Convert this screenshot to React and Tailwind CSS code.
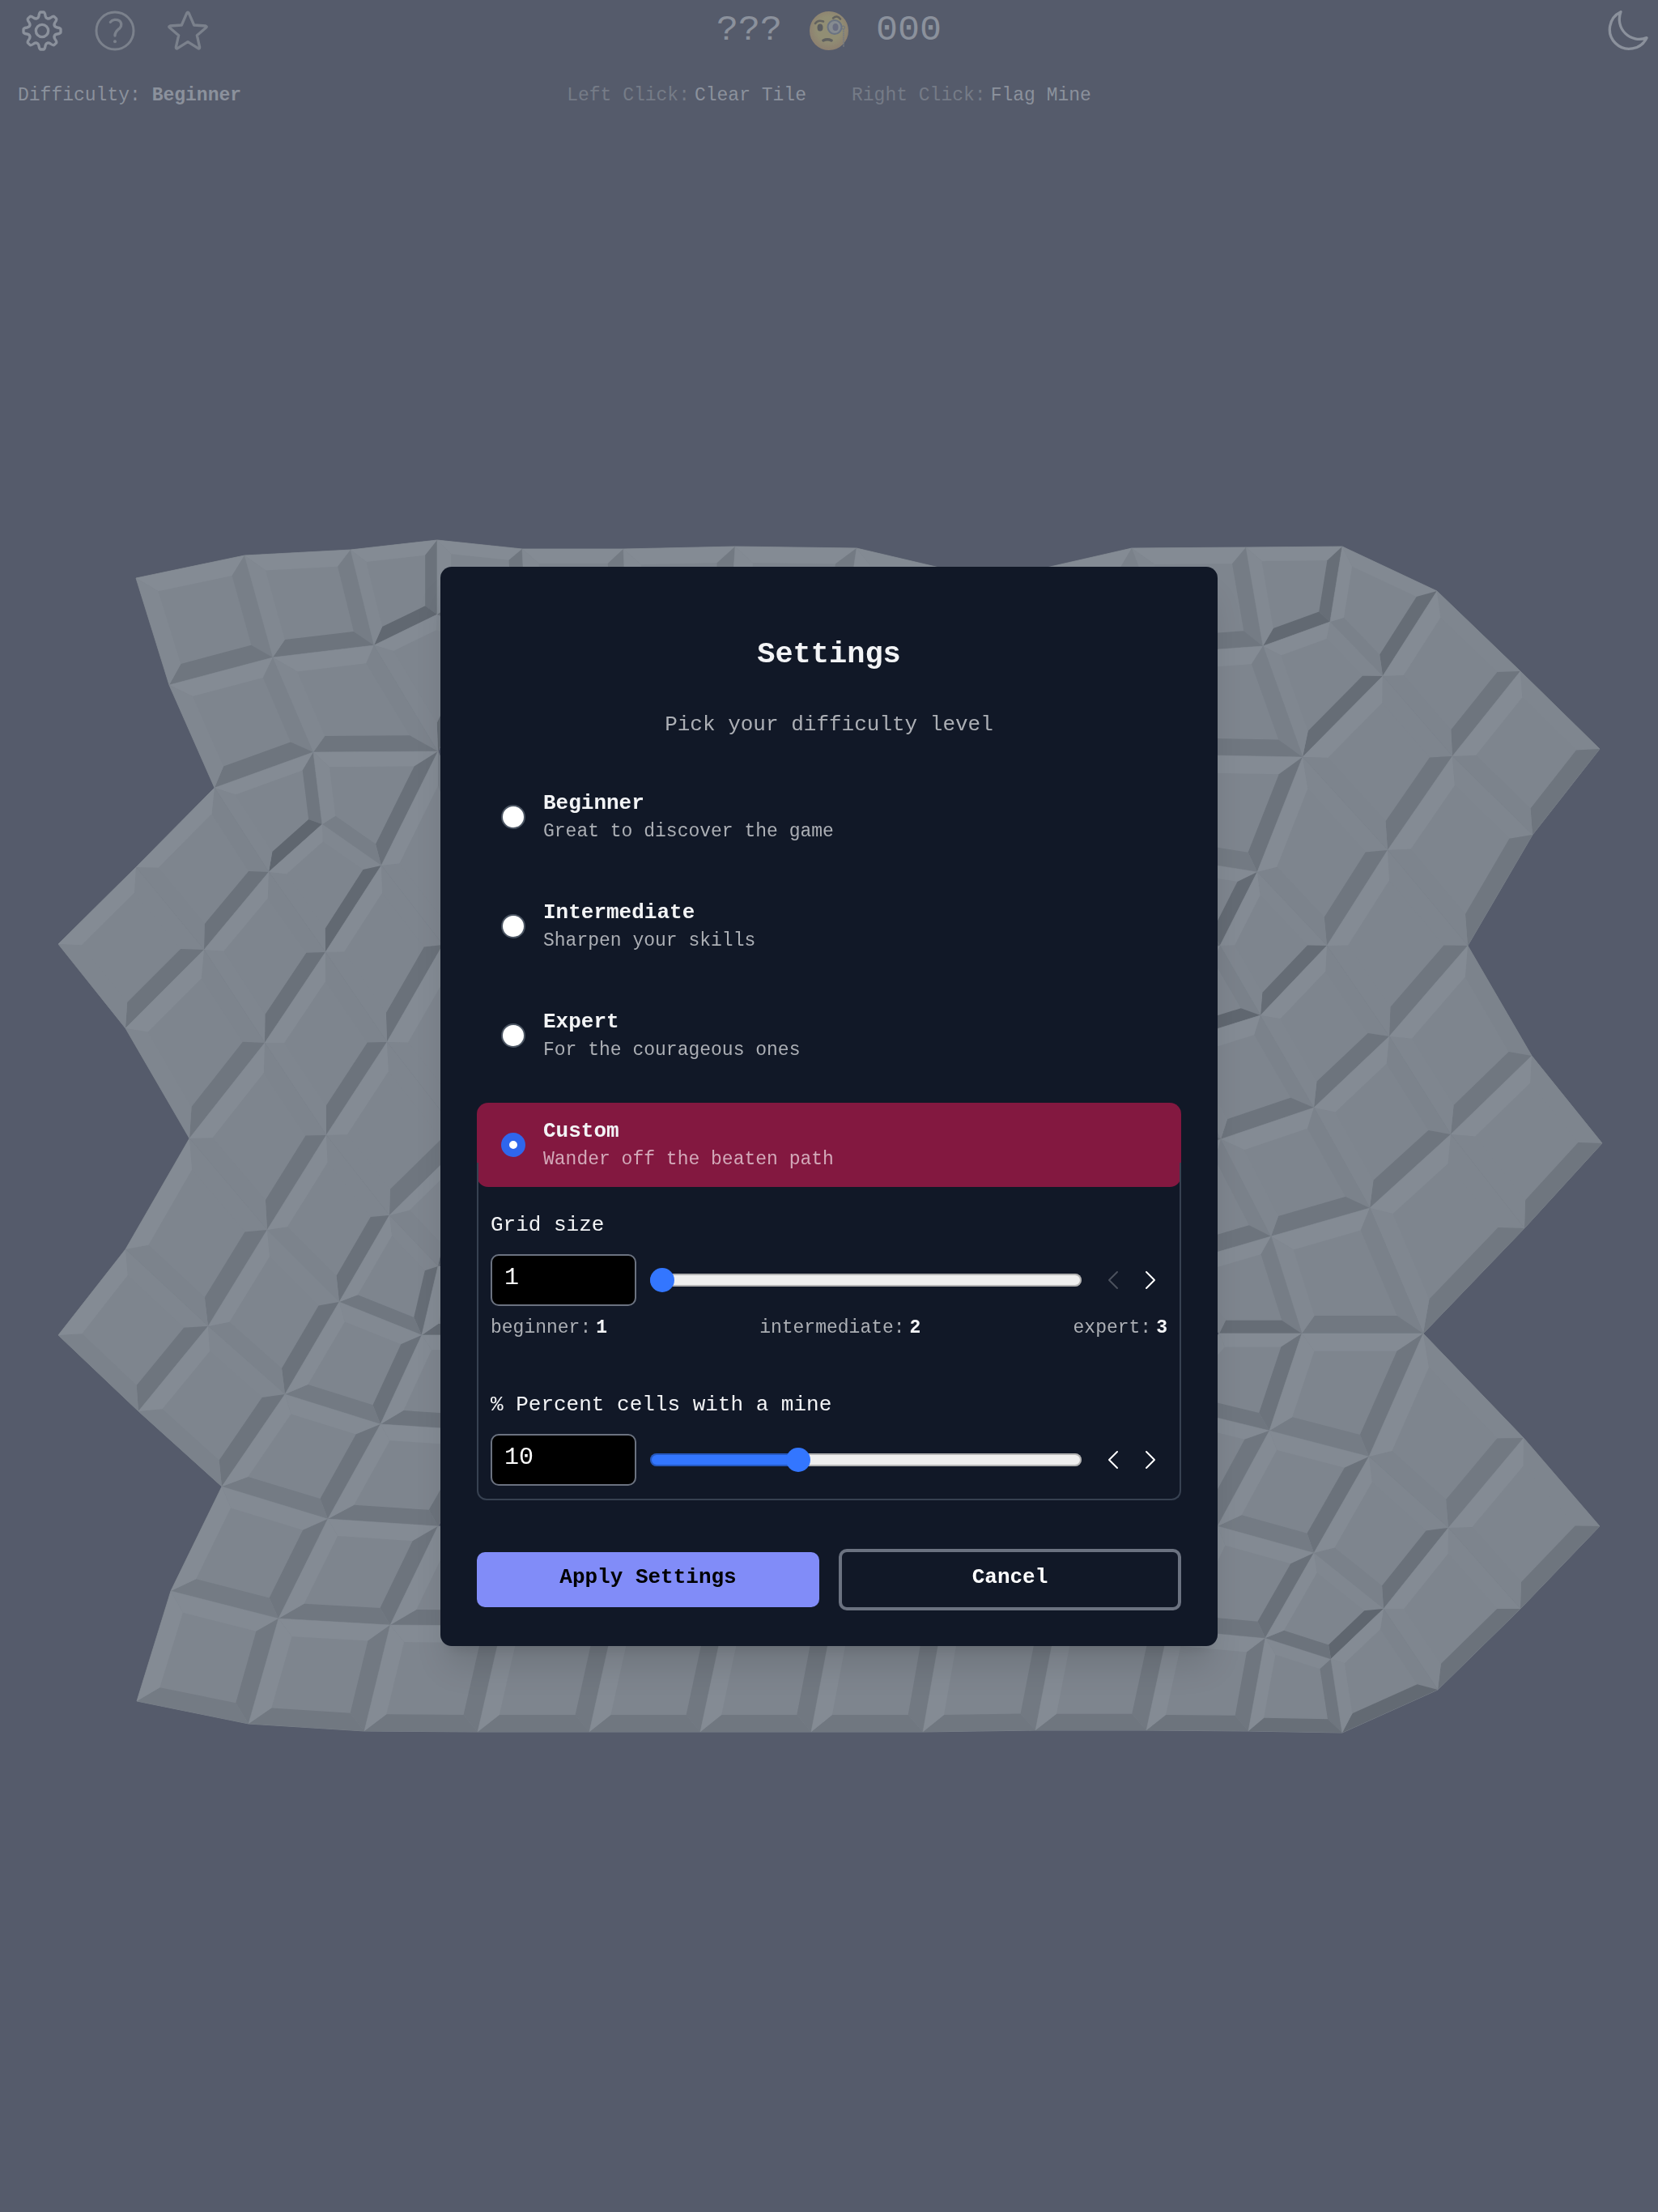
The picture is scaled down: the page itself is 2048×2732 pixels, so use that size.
import React, { useState } from 'react';

// Corner points of the tiles, clockwise from the top left corner.
const TILES = [
  // left part
  [168, 714, 302, 686, 337, 812, 209, 846],
  [302, 686, 433, 679, 462, 797, 337, 812],
  [433, 679, 540, 667, 540, 759, 462, 797],
  [209, 846, 337, 812, 387, 929, 265, 973],
  [337, 812, 462, 797, 541, 928, 387, 929],
  [462, 797, 540, 759, 605, 792, 541, 928],
  [265, 973, 387, 929, 398, 1018, 332, 1077],
  [387, 929, 541, 928, 471, 1069, 398, 1018],
  [541, 928, 605, 1080, 547, 1167, 471, 1069],
  [398, 1018, 471, 1069, 402, 1176, 332, 1077],
  [265, 973, 332, 1077, 252, 1173, 168, 1071],
  [168, 1071, 252, 1173, 155, 1270, 72, 1166],
  [332, 1077, 402, 1176, 327, 1288, 252, 1173],
  [252, 1173, 327, 1288, 234, 1406, 155, 1270],
  [471, 1069, 547, 1167, 478, 1287, 402, 1176],
  [547, 1167, 640, 1290, 574, 1410, 478, 1287],
  [402, 1176, 478, 1287, 403, 1402, 327, 1288],
  [327, 1288, 403, 1402, 330, 1519, 234, 1406],
  [478, 1287, 574, 1410, 481, 1501, 403, 1402],
  [574, 1410, 640, 1450, 541, 1564, 481, 1501],
  [234, 1406, 330, 1519, 257, 1638, 155, 1543],
  [155, 1543, 257, 1638, 171, 1743, 72, 1649],
  [403, 1402, 481, 1501, 419, 1608, 330, 1519],
  [330, 1519, 419, 1608, 352, 1722, 257, 1638],
  [257, 1638, 352, 1722, 274, 1836, 171, 1743],
  [481, 1501, 541, 1564, 521, 1649, 419, 1608],
  [541, 1564, 640, 1560, 637, 1649, 521, 1649],
  [419, 1608, 521, 1649, 470, 1759, 352, 1722],
  [352, 1722, 470, 1759, 405, 1876, 274, 1836],
  [274, 1836, 405, 1876, 344, 1999, 211, 1965],
  [211, 1965, 344, 1999, 307, 2129, 169, 2101],
  [521, 1649, 637, 1649, 608, 1768, 470, 1759],
  [470, 1759, 608, 1768, 541, 1885, 405, 1876],
  [405, 1876, 541, 1885, 482, 2007, 344, 1999],
  [541, 1885, 690, 1890, 620, 2008, 482, 2007],
  // bottom row
  [344, 1999, 482, 2007, 450, 2138, 307, 2129],
  [482, 2007, 620, 2008, 590, 2139, 450, 2138],
  [620, 2008, 757, 2008, 728, 2139, 590, 2139],
  [757, 2008, 893, 2008, 865, 2139, 728, 2139],
  [893, 2008, 1027, 2008, 1002, 2139, 865, 2139],
  [1027, 2008, 1163, 2008, 1140, 2139, 1002, 2139],
  [1163, 2008, 1304, 2008, 1279, 2137, 1140, 2139],
  [1304, 2008, 1443, 2012, 1416, 2137, 1279, 2137],
  [1443, 2012, 1563, 2023, 1542, 2138, 1416, 2137],
  [1563, 2023, 1644, 2049, 1658, 2140, 1542, 2138],
  // top row
  [540, 667, 645, 678, 650, 780, 540, 759],
  [645, 678, 770, 678, 775, 800, 650, 780],
  [770, 678, 908, 675, 900, 800, 775, 800],
  [908, 675, 1058, 677, 1040, 800, 900, 800],
  [1058, 677, 1190, 708, 1180, 820, 1040, 800],
  [1262, 708, 1398, 677, 1447, 806, 1300, 830],
  [1398, 677, 1539, 676, 1560, 798, 1447, 806],
  [1539, 676, 1658, 675, 1643, 768, 1560, 798],
  // right part
  [1658, 675, 1775, 730, 1708, 835, 1643, 768],
  [1775, 730, 1878, 829, 1794, 934, 1708, 835],
  [1878, 829, 1976, 925, 1893, 1031, 1794, 934],
  [1560, 798, 1643, 768, 1708, 835, 1609, 935],
  [1609, 935, 1708, 835, 1794, 934, 1714, 1050],
  [1714, 1050, 1794, 934, 1893, 1031, 1813, 1168],
  [1447, 806, 1560, 798, 1609, 935, 1448, 932],
  [1448, 932, 1609, 935, 1553, 1077, 1460, 1062],
  [1460, 1062, 1553, 1077, 1507, 1168, 1385, 1150],
  [1609, 935, 1714, 1050, 1639, 1168, 1553, 1077],
  [1553, 1077, 1639, 1168, 1557, 1254, 1507, 1168],
  [1714, 1050, 1813, 1168, 1716, 1280, 1639, 1168],
  [1813, 1168, 1892, 1304, 1792, 1401, 1716, 1280],
  [1892, 1304, 1979, 1412, 1883, 1517, 1792, 1401],
  [1417, 1195, 1507, 1168, 1557, 1254, 1445, 1289],
  [1445, 1289, 1557, 1254, 1623, 1368, 1508, 1407],
  [1400, 1330, 1445, 1289, 1508, 1407, 1424, 1455],
  [1639, 1168, 1716, 1280, 1623, 1368, 1557, 1254],
  [1716, 1280, 1792, 1401, 1692, 1492, 1623, 1368],
  [1792, 1401, 1883, 1517, 1758, 1647, 1692, 1492],
  [1424, 1438, 1508, 1407, 1570, 1527, 1440, 1565],
  [1508, 1407, 1623, 1368, 1692, 1492, 1570, 1527],
  [1570, 1527, 1692, 1492, 1758, 1647, 1608, 1647],
  [1440, 1565, 1570, 1527, 1608, 1647, 1506, 1647],
  [1506, 1647, 1608, 1647, 1568, 1767, 1430, 1733],
  [1608, 1647, 1758, 1647, 1691, 1799, 1568, 1767],
  [1758, 1647, 1882, 1776, 1789, 1887, 1691, 1799],
  [1882, 1776, 1976, 1885, 1878, 1987, 1789, 1887],
  [1430, 1733, 1568, 1767, 1504, 1885, 1388, 1817],
  [1568, 1767, 1691, 1799, 1623, 1918, 1504, 1885],
  [1691, 1799, 1789, 1887, 1709, 1987, 1623, 1918],
  [1789, 1887, 1878, 1987, 1776, 2087, 1709, 1987],
  [1504, 1885, 1623, 1918, 1563, 2023, 1443, 2012],
  [1623, 1918, 1709, 1987, 1644, 2049, 1563, 2023],
  [1709, 1987, 1776, 2087, 1658, 2140, 1644, 2049],
];

const INSET = 0.68;
const FACE = [126, 133, 142];

function toPoints(list) {
  return list.map((p) => p.join(',')).join(' ');
}

// Light falls in from the upper left, steep bevels get darker.
function shade(a, b, center) {
  const dx = b[0] - a[0];
  const dy = b[1] - a[1];
  const len = Math.hypot(dx, dy) || 1;
  const nx = dy / len;
  const ny = -dx / len;
  const light = nx * -0.6 + ny * -0.78;
  const dist = Math.abs((a[0] - center[0]) * nx + (a[1] - center[1]) * ny);
  const steep = Math.min(1.6, (62 / Math.max(dist, 20)) ** 2);
  const delta = light > 0 ? Math.min(6, light * 8) : light * 20 * steep;
  return `rgb(${FACE.map((c) => Math.round(c + delta)).join(',')})`;
}

function Tile({ data }) {
  const outer = [0, 2, 4, 6].map((i) => [data[i], data[i + 1]]);
  const center = [0, 1].map((k) => outer.reduce((sum, p) => sum + p[k], 0) / 4);
  const inner = outer.map((p) => [
    center[0] + (p[0] - center[0]) * INSET,
    center[1] + (p[1] - center[1]) * INSET,
  ]);
  return (
    <g>
      <polygon
        points={toPoints(outer)}
        fill="#7e858e"
        stroke="#7b828b"
        strokeWidth="1"
      />
      {outer.map((p, i) => {
        const next = (i + 1) % 4;
        return (
          <polygon
            key={i}
            points={toPoints([p, outer[next], inner[next], inner[i]])}
            fill={shade(p, outer[next], center)}
          />
        );
      })}
    </g>
  );
}

function Board() {
  return (
    <svg
      className="absolute inset-0 h-full w-full"
      viewBox="0 0 2048 2732"
      aria-hidden="true"
    >
      {TILES.map((tile, i) => (
        <Tile key={i} data={tile} />
      ))}
    </svg>
  );
}

function Icon({ children }) {
  return (
    <svg
      className="size-[50px]"
      viewBox="-75 -75 150 150"
      fill="none"
      stroke="currentColor"
      strokeWidth="10"
      strokeLinecap="round"
      strokeLinejoin="round"
      aria-hidden="true"
    >
      {children}
    </svg>
  );
}

function GearIcon() {
  return (
    <Icon>
      {[0, 45, 90, 135, 180, 225, 270, 315].map((angle) => (
        <path
          key={angle}
          transform={`rotate(${angle})`}
          d="M-19 -46Q-14 -47 -12 -56Q-10 -69 -5 -69H5Q10 -69 12 -56Q14 -47 19 -46"
        />
      ))}
      <circle r="23" />
    </Icon>
  );
}

function HelpIcon() {
  return (
    <Icon>
      <circle r="69" strokeWidth="9" />
      <path d="M-17 -32C-10 -42 6 -43 15 -38C25 -32 26 -18 18 -10C9 -2 0 3 0 18" />
      <circle cy="40" r="6" fill="currentColor" stroke="none" />
    </Icon>
  );
}

function StarIcon() {
  return (
    <Icon>
      <path d="M-4 -65Q0 -72 4 -65L23 -21L66 -18Q73 -16 67 -11L34 17L44 61Q44 68 38 65L0 41L-38 65Q-44 68 -44 61L-34 17L-67 -11Q-73 -16 -66 -18L-23 -21Z" />
    </Icon>
  );
}

function MoonIcon() {
  return (
    <Icon>
      <path d="M-27 -70A72 72 0 1 0 69 26A74 74 0 0 1 -27 -70Z" />
    </Icon>
  );
}

function MonocleFace() {
  return (
    <svg className="size-[48px]" viewBox="0 0 48 48" fill="none" aria-hidden="true">
      <defs>
        <radialGradient id="skin" cx="50%" cy="45%" r="52%">
          <stop offset="0.6" stopColor="#918e74" />
          <stop offset="1" stopColor="#8d8170" />
        </radialGradient>
      </defs>
      <circle cx="24" cy="24" r="24" fill="url(#skin)" />
      <ellipse cx="13" cy="20" rx="3.5" ry="4.5" fill="#5b5d60" />
      <path d="M7 15Q10 10 17 12.5" stroke="#62625f" strokeWidth="2.5" strokeLinecap="round" />
      <path d="M29 8.5Q34 4 38 9.5" stroke="#62625f" strokeWidth="2.5" strokeLinecap="round" />
      <circle cx="31" cy="19.5" r="8.5" fill="#868b90" stroke="#6a7382" strokeWidth="2" />
      <ellipse cx="32" cy="19.5" rx="3.5" ry="4.5" fill="#696d80" />
      <circle cx="41.5" cy="20" r="2" stroke="#6a7382" strokeWidth="1" />
      <path d="M42 22V44" stroke="#767b80" strokeWidth="2" strokeDasharray="1.5 1" />
      <path d="M17 36Q22 33.5 27 36" stroke="#5f605f" strokeWidth="3.5" strokeLinecap="round" />
    </svg>
  );
}

function Header() {
  return (
    <header className="relative text-[#8b919c]">
      <div className="grid grid-cols-[1fr_auto_1fr] items-start px-[12px] pt-[13px]">
        <nav className="flex gap-[40px] pl-[15px]">
          <button aria-label="Settings">
            <GearIcon />
          </button>
          <button className="text-[#7b818c]" aria-label="Help">
            <HelpIcon />
          </button>
          <button className="text-[#7b818c]" aria-label="Favorite">
            <StarIcon />
          </button>
        </nav>
        <div className="flex items-center gap-[34px] text-[45px] leading-[50px]">
          <span>???</span>
          <MonocleFace />
          <span>000</span>
        </div>
        <button className="justify-self-end" aria-label="Dark mode">
          <MoonIcon />
        </button>
      </div>
      <div className="mt-[38px] grid grid-cols-[1fr_auto_1fr] px-[22px] text-[23px] leading-[34px]">
        <p>
          Difficulty: <b>Beginner</b>
        </p>
        <div className="flex gap-[56px]">
          <p className="flex gap-[6px]">
            <span className="text-[#757b87]">Left Click:</span>
            <span>Clear Tile</span>
          </p>
          <p className="flex gap-[6px]">
            <span className="text-[#757b87]">Right Click:</span>
            <span>Flag Mine</span>
          </p>
        </div>
      </div>
    </header>
  );
}

function Option({ id, title, hint, checked, onChange }) {
  return (
    <label
      htmlFor={id}
      className={
        checked
          ? 'flex items-center gap-[22px] rounded-[14px] bg-[#831840] pt-[17px] pb-[17px] pl-[30px] text-[#d3a9b9]'
          : 'flex items-center gap-[22px] rounded-[14px] pt-[17px] pb-[17px] pl-[30px] text-[#acafb5]'
      }
    >
      <input
        id={id}
        type="radio"
        name="difficulty"
        checked={checked}
        onChange={onChange}
        className="size-[30px] shrink-0 appearance-none rounded-full border-2 border-[#4b5563] bg-white checked:border-[10px] checked:border-[#2f66ec]"
      />
      <span>
        <span className="block text-[26px] leading-[36px] font-bold text-[#f3f4f6]">
          {title}
        </span>
        <span className="block text-[23px] leading-[34px]">{hint}</span>
      </span>
    </label>
  );
}

function Arrow({ label, d, disabled, onClick }) {
  return (
    <button
      aria-label={label}
      disabled={disabled}
      onClick={onClick}
      className="text-white disabled:text-[#4b515d]"
    >
      <svg
        className="h-[24px] w-[16px]"
        viewBox="0 0 16 24"
        fill="none"
        stroke="currentColor"
        strokeWidth="2"
        strokeLinecap="round"
        strokeLinejoin="round"
      >
        <path d={d} />
      </svg>
    </button>
  );
}

function NumberField({ id, label, value, min, max, onChange }) {
  const ratio = (value - min) / (max - min);
  const fill = `calc(15px + (100% - 30px) * ${ratio})`;
  return (
    <div>
      <label htmlFor={id} className="block text-[26px] leading-[36px] text-[#f3f4f6]">
        {label}
      </label>
      <div className="mt-[18px] flex items-center">
        <input
          id={id}
          type="text"
          value={value}
          onChange={(e) => onChange(Number(e.target.value) || min)}
          className="h-[64px] w-[180px] rounded-[10px] border-2 border-[#6b7280] bg-black px-[15px] pb-[6px] text-[30px] text-white"
        />
        <div className="ml-[17px] flex h-[30px] flex-1 items-center">
          <input
            type="range"
            aria-label={label}
            min={min}
            max={max}
            value={value}
            onChange={(e) => onChange(Number(e.target.value))}
            style={{
              backgroundImage: `linear-gradient(to right, #3376ff ${fill}, #efefef ${fill})`,
            }}
            className="h-[16px] w-full appearance-none rounded-full shadow-[inset_0_0_0_2px_rgba(0,0,0,0.25)] [&::-webkit-slider-thumb]:size-[30px] [&::-webkit-slider-thumb]:appearance-none [&::-webkit-slider-thumb]:rounded-full [&::-webkit-slider-thumb]:bg-[#3376ff]"
          />
        </div>
        <div className="mr-[13px] ml-[31px] flex gap-[30px]">
          <Arrow
            label="Decrease"
            d="M13 2L3 12L13 22"
            disabled={value <= min}
            onClick={() => onChange(value - 1)}
          />
          <Arrow
            label="Increase"
            d="M3 2L13 12L3 22"
            disabled={value >= max}
            onClick={() => onChange(value + 1)}
          />
        </div>
      </div>
    </div>
  );
}

const LEVELS = [
  { id: 'beginner', title: 'Beginner', hint: 'Great to discover the game', size: 1 },
  { id: 'intermediate', title: 'Intermediate', hint: 'Sharpen your skills', size: 2 },
  { id: 'expert', title: 'Expert', hint: 'For the courageous ones', size: 3 },
];

function SettingsDialog() {
  const [level, setLevel] = useState('custom');
  const [size, setSize] = useState(1);
  const [percent, setPercent] = useState(10);

  return (
    <div
      role="dialog"
      aria-labelledby="settings-title"
      className="w-full max-w-[960px] rounded-[14px] bg-[#111827] px-[45px] pt-[84px] pb-[44px] shadow-[0_32px_40px_-8px_rgba(0,0,0,0.12),0_13px_16px_-10px_rgba(0,0,0,0.1)]"
    >
      <h1
        id="settings-title"
        className="text-center text-[37px] leading-[48px] font-bold text-[#f3f4f6]"
      >
        Settings
      </h1>
      <p className="mt-[43px] text-center text-[26px] leading-[40px] text-[#acafb5]">
        Pick your difficulty level
      </p>
      <div className="mt-[42px] flex flex-col gap-[31px]">
        {LEVELS.map((l) => (
          <Option
            key={l.id}
            id={l.id}
            title={l.title}
            hint={l.hint}
            checked={level === l.id}
            onChange={() => setLevel(l.id)}
          />
        ))}
        <div>
          <Option
            id="custom"
            title="Custom"
            hint="Wander off the beaten path"
            checked={level === 'custom'}
            onChange={() => setLevel('custom')}
          />
          <div className="-mt-[30px] rounded-b-[12px] border-2 border-t-0 border-[#374151] px-[15px] pt-[59px] pb-[16px]">
            <NumberField
              id="grid-size"
              label="Grid size"
              value={size}
              min={1}
              max={10}
              onChange={setSize}
            />
            <ul className="mt-[10px] mb-[60px] flex justify-between text-[23px] leading-[34px] text-[#acafb5]">
              {LEVELS.map((l) => (
                <li key={l.id} className="flex gap-[6px]">
                  <span>{l.id}:</span>
                  <b className="text-[#f3f4f6]">{l.size}</b>
                </li>
              ))}
            </ul>
            <NumberField
              id="mine-percent"
              label="% Percent cells with a mine"
              value={percent}
              min={0}
              max={30}
              onChange={setPercent}
            />
          </div>
        </div>
      </div>
      <div className="mt-[60px] grid grid-cols-2 items-center gap-[24px] text-[26px] leading-[36px] font-bold">
        <button className="rounded-[10px] bg-[#818cf8] pt-[13px] pb-[19px] text-black">
          Apply Settings
        </button>
        <button className="rounded-[10px] border-4 border-[#6b7280] pt-[13px] pb-[19px] text-white">
          Cancel
        </button>
      </div>
    </div>
  );
}

export default function App() {
  return (
    <div className="relative min-h-screen bg-[#555b6b] font-['Liberation_Mono',monospace]">
      <Board />
      <Header />
      <div className="fixed inset-0 flex items-center justify-center">
        <SettingsDialog />
      </div>
    </div>
  );
}
